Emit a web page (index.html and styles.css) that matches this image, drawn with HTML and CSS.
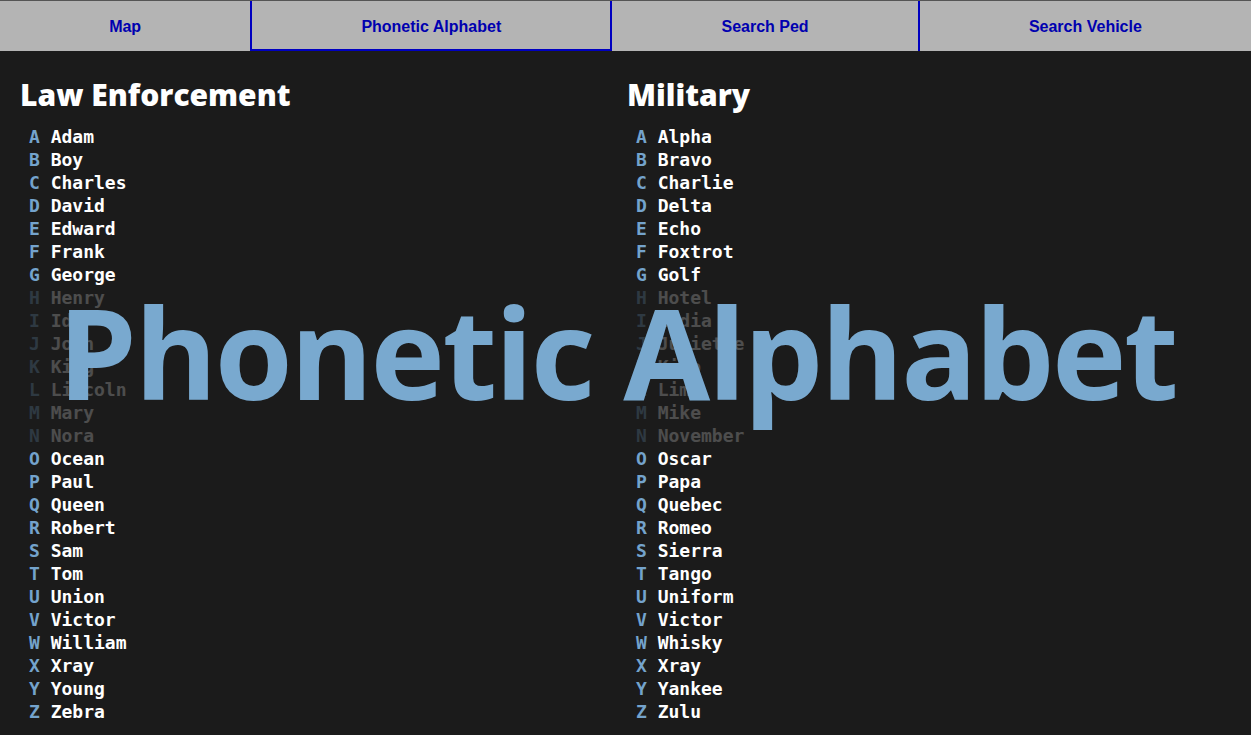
FILE: index.html
```html
<!DOCTYPE html>
<html>
<head>
<meta charset="utf-8">
<link rel="stylesheet" href="styles.css">
</head>
<body>
<nav class="tabs">
  <div class="tab">Map</div>
  <div class="tab active">Phonetic Alphabet</div>
  <div class="tab">Search Ped</div>
  <div class="tab last">Search Vehicle</div>
</nav>
<main class="content">
  <section class="col">
    <h2 class="title">Law Enforcement</h2>
    <ul class="list">
      <li><span class="l">A</span> Adam</li>
      <li><span class="l">B</span> Boy</li>
      <li><span class="l">C</span> Charles</li>
      <li><span class="l">D</span> David</li>
      <li><span class="l">E</span> Edward</li>
      <li><span class="l">F</span> Frank</li>
      <li><span class="l">G</span> George</li>
      <li class="dim"><span class="l">H</span> Henry</li>
      <li class="dim"><span class="l">I</span> Ida</li>
      <li class="dim"><span class="l">J</span> John</li>
      <li class="dim"><span class="l">K</span> King</li>
      <li class="dim"><span class="l">L</span> Lincoln</li>
      <li class="dim"><span class="l">M</span> Mary</li>
      <li class="dim"><span class="l">N</span> Nora</li>
      <li><span class="l">O</span> Ocean</li>
      <li><span class="l">P</span> Paul</li>
      <li><span class="l">Q</span> Queen</li>
      <li><span class="l">R</span> Robert</li>
      <li><span class="l">S</span> Sam</li>
      <li><span class="l">T</span> Tom</li>
      <li><span class="l">U</span> Union</li>
      <li><span class="l">V</span> Victor</li>
      <li><span class="l">W</span> William</li>
      <li><span class="l">X</span> Xray</li>
      <li><span class="l">Y</span> Young</li>
      <li><span class="l">Z</span> Zebra</li>
    </ul>
  </section>
  <section class="col">
    <h2 class="title">Military</h2>
    <ul class="list">
      <li><span class="l">A</span> Alpha</li>
      <li><span class="l">B</span> Bravo</li>
      <li><span class="l">C</span> Charlie</li>
      <li><span class="l">D</span> Delta</li>
      <li><span class="l">E</span> Echo</li>
      <li><span class="l">F</span> Foxtrot</li>
      <li><span class="l">G</span> Golf</li>
      <li class="dim"><span class="l">H</span> Hotel</li>
      <li class="dim"><span class="l">I</span> India</li>
      <li class="dim"><span class="l">J</span> Juliette</li>
      <li class="dim"><span class="l">K</span> Kilo</li>
      <li class="dim"><span class="l">L</span> Lima</li>
      <li class="dim"><span class="l">M</span> Mike</li>
      <li class="dim"><span class="l">N</span> November</li>
      <li><span class="l">O</span> Oscar</li>
      <li><span class="l">P</span> Papa</li>
      <li><span class="l">Q</span> Quebec</li>
      <li><span class="l">R</span> Romeo</li>
      <li><span class="l">S</span> Sierra</li>
      <li><span class="l">T</span> Tango</li>
      <li><span class="l">U</span> Uniform</li>
      <li><span class="l">V</span> Victor</li>
      <li><span class="l">W</span> Whisky</li>
      <li><span class="l">X</span> Xray</li>
      <li><span class="l">Y</span> Yankee</li>
      <li><span class="l">Z</span> Zulu</li>
    </ul>
  </section>
</main>
<div class="overlay">Phonetic Alphabet</div>
</body>
</html>
```
FILE: styles.css
```css
html, body {
  margin: 0;
  padding: 0;
  background: #1b1b1b;
  height: 100%;
  overflow: hidden;
}
.tabs {
  display: flex;
  height: 51px;
  background: #b4b4b4;
  border-top: 1px solid #555;
  box-sizing: border-box;
}
.tab {
  flex: 1 1 auto;
  display: flex;
  align-items: center;
  justify-content: center;
  font-family: "Liberation Sans", Arial, sans-serif;
  font-weight: bold;
  font-size: 16px;
  color: #0000b0;
  padding-top: 2px;
  box-sizing: border-box;
}
.tab.active {
  border: 2px solid #0000c0;
  border-top: none;
  padding-top: 4px;
}
.tab.last {
  border-left: 2px solid #0000c0;
}
.content {
  display: grid;
  grid-template-columns: 607px 1fr;
  padding: 0 20px;
}
.title {
  font-family: "Open Sans", "Noto Sans", sans-serif;
  font-weight: 800;
  font-size: 30px;
  color: #fff;
  margin: 24px 0 10px 0;
  line-height: 40px;
}
.list {
  list-style: none;
  margin: 0;
  padding: 0 0 0 9px;
  font-family: "DejaVu Sans Mono", monospace;
  font-weight: bold;
  font-size: 18px;
  line-height: 23px;
  color: #fff;
}
.l {
  color: #74a3cc;
}
.dim {
  opacity: 0.22;
}
.overlay {
  position: absolute;
  left: 0;
  right: 17px;
  top: 261px;
  text-align: center;
  font-family: "Open Sans", "Noto Sans", sans-serif;
  font-weight: 700;
  font-size: 126px;
  line-height: 180px;
  letter-spacing: -2.5px;
  color: #79a9cf;
  white-space: nowrap;
}
```
